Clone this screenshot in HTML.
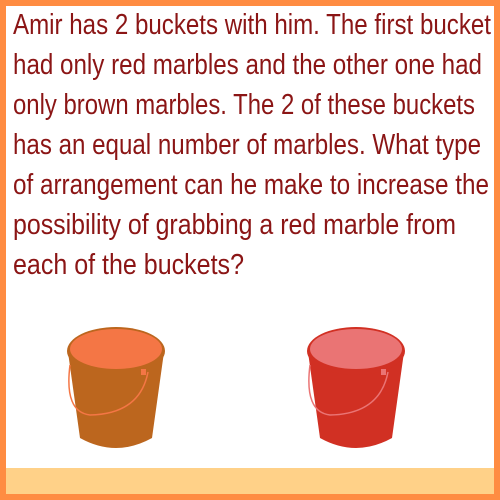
<!DOCTYPE html>
<html><head><style>
body{margin:0;width:500px;height:500px;overflow:hidden;background:#fff}
.f{position:absolute;left:0;top:0;width:488px;height:488px;border:6px solid #FF8C42;background:#fff}
.band{position:absolute;left:6px;top:468px;width:488px;height:26px;background:#FFD188}
svg{position:absolute;left:0;top:0}
text{font-family:"Liberation Sans",sans-serif;font-size:29px;fill:#8B1515}
</style></head><body>
<div class="f"></div>
<div class="band"></div>
<svg width="500" height="500">
<text x="13" y="34" textLength="478" lengthAdjust="spacingAndGlyphs">Amir has 2 buckets with him. The first bucket</text>
<text x="13" y="74" textLength="469" lengthAdjust="spacingAndGlyphs">had only red marbles and the other one had</text>
<text x="13" y="114" textLength="462" lengthAdjust="spacingAndGlyphs">only brown marbles. The 2 of these buckets</text>
<text x="13" y="154" textLength="468" lengthAdjust="spacingAndGlyphs">has an equal number of marbles. What type</text>
<text x="13" y="194" textLength="476" lengthAdjust="spacingAndGlyphs">of arrangement can he make to increase the</text>
<text x="13" y="234" textLength="443" lengthAdjust="spacingAndGlyphs">possibility of grabbing a red marble from</text>
<text x="13" y="274" textLength="231" lengthAdjust="spacingAndGlyphs">each of the buckets?</text>
<g>
<path d="M68 352 L80 438 Q116 458 152 438 L164 352 Z" fill="#BC661E"/>
<ellipse cx="116" cy="351" rx="49" ry="24" fill="#BC661E"/>
<ellipse cx="116" cy="349" rx="46" ry="20" fill="#F47645"/>
<path d="M70 365 Q64 412 90 415 Q140 414 148 372" fill="none" stroke="#F47645" stroke-width="1.5"/>
<rect x="141" y="369" width="5" height="6" fill="#F47645"/>
</g>
<g>
<path d="M308 352 L320 438 Q356 458 392 438 L404 352 Z" fill="#D13023"/>
<ellipse cx="356" cy="351" rx="49" ry="24" fill="#D13023"/>
<ellipse cx="356" cy="349" rx="46" ry="20" fill="#EA7474"/>
<path d="M310 365 Q304 412 330 415 Q380 414 388 372" fill="none" stroke="#EA7474" stroke-width="1.5"/>
<rect x="381" y="369" width="5" height="6" fill="#EA7474"/>
</g>
</svg>
</body></html>
